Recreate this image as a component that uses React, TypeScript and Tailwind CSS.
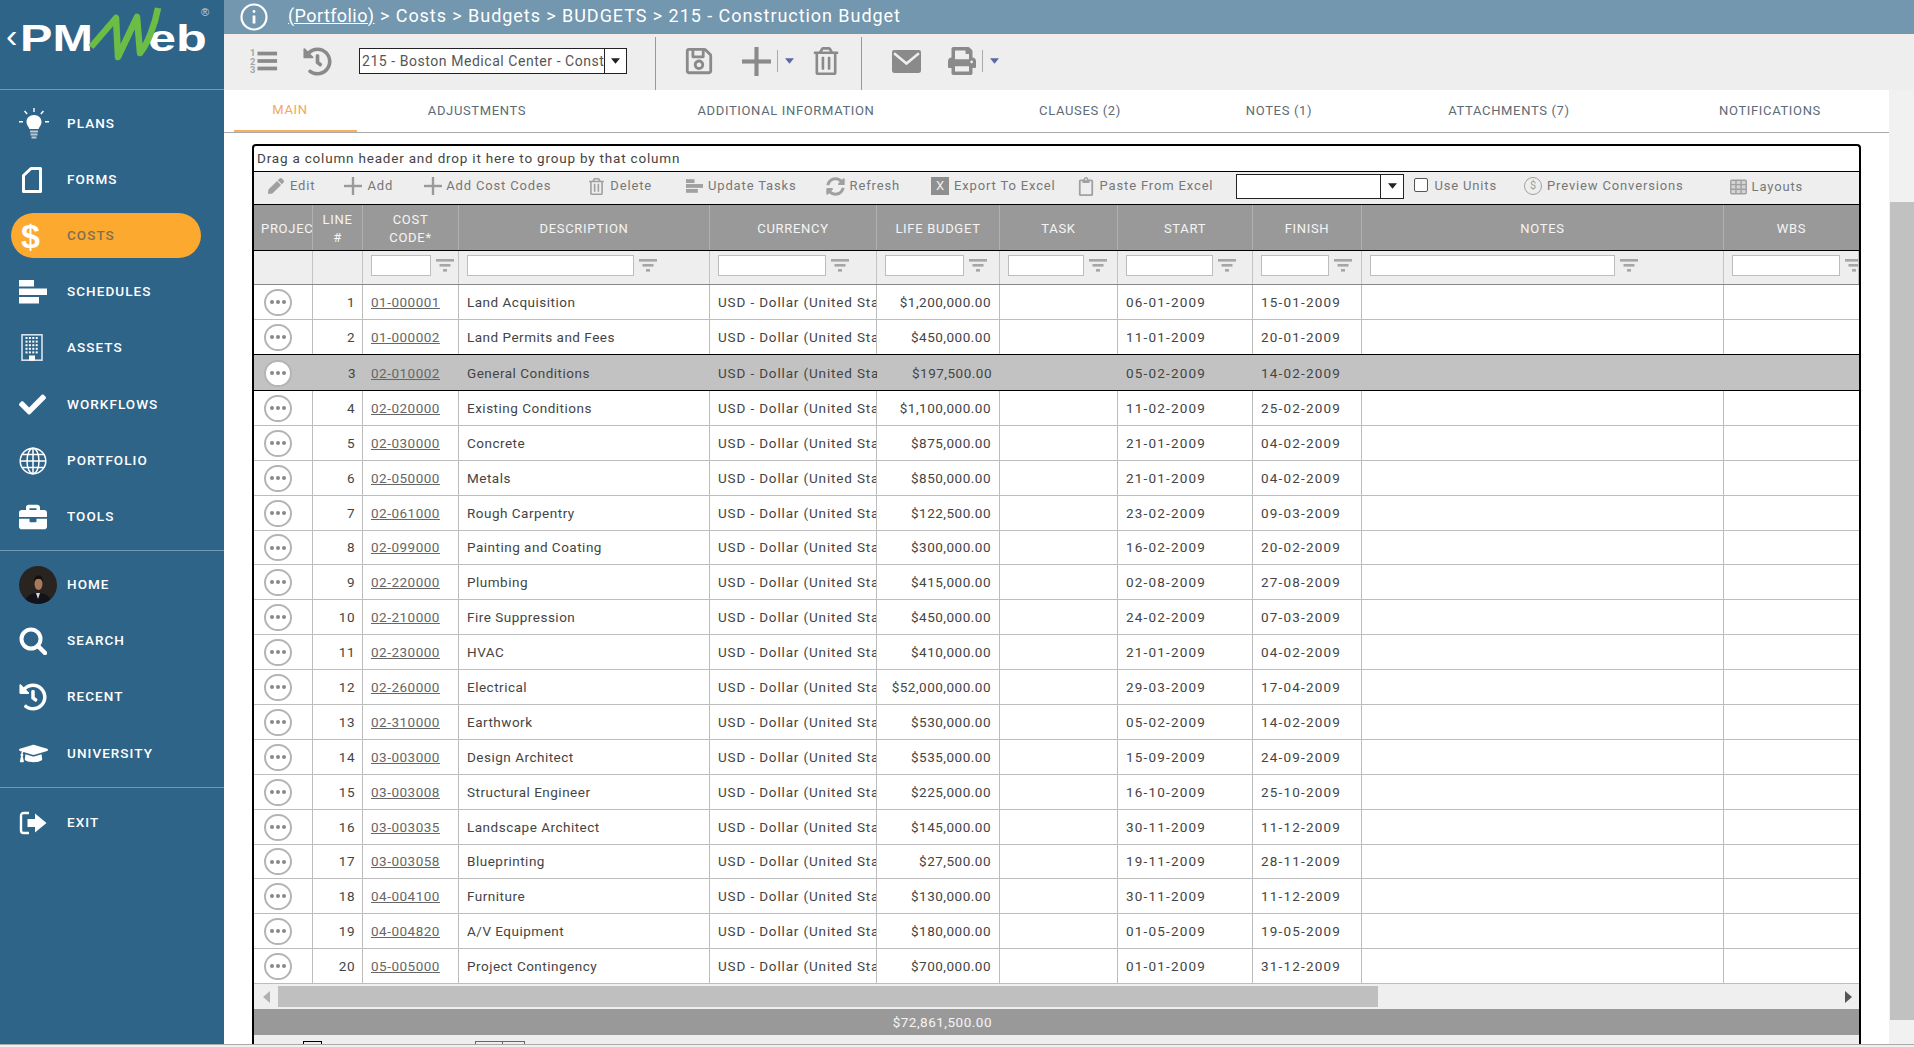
import React from "react";
import { FaCheck, FaBriefcase, FaHistory, FaGraduationCap, FaRegSave, FaRegTrashAlt, FaPrint, FaSyncAlt, FaRegClipboard, FaPen } from "react-icons/fa";

const cols = "grid grid-cols-[59px_50px_96px_251px_167px_123px_118px_135px_109px_362px_135px]";

const rows: [string, string, string, string, string][] = [
  ["01-000001", "Land Acquisition", "$1,200,000.00", "06-01-2009", "15-01-2009"],
  ["01-000002", "Land Permits and Fees", "$450,000.00", "11-01-2009", "20-01-2009"],
  ["02-010002", "General Conditions", "$197,500.00", "05-02-2009", "14-02-2009"],
  ["02-020000", "Existing Conditions", "$1,100,000.00", "11-02-2009", "25-02-2009"],
  ["02-030000", "Concrete", "$875,000.00", "21-01-2009", "04-02-2009"],
  ["02-050000", "Metals", "$850,000.00", "21-01-2009", "04-02-2009"],
  ["02-061000", "Rough Carpentry", "$122,500.00", "23-02-2009", "09-03-2009"],
  ["02-099000", "Painting and Coating", "$300,000.00", "16-02-2009", "20-02-2009"],
  ["02-220000", "Plumbing", "$415,000.00", "02-08-2009", "27-08-2009"],
  ["02-210000", "Fire Suppression", "$450,000.00", "24-02-2009", "07-03-2009"],
  ["02-230000", "HVAC", "$410,000.00", "21-01-2009", "04-02-2009"],
  ["02-260000", "Electrical", "$52,000,000.00", "29-03-2009", "17-04-2009"],
  ["02-310000", "Earthwork", "$530,000.00", "05-02-2009", "14-02-2009"],
  ["03-003000", "Design Architect", "$535,000.00", "15-09-2009", "24-09-2009"],
  ["03-003008", "Structural Engineer", "$225,000.00", "16-10-2009", "25-10-2009"],
  ["03-003035", "Landscape Architect", "$145,000.00", "30-11-2009", "11-12-2009"],
  ["03-003058", "Blueprinting", "$27,500.00", "19-11-2009", "28-11-2009"],
  ["04-004100", "Furniture", "$130,000.00", "30-11-2009", "11-12-2009"],
  ["04-004820", "A/V Equipment", "$180,000.00", "01-05-2009", "19-05-2009"],
  ["05-005000", "Project Contingency", "$700,000.00", "01-01-2009", "31-12-2009"],
];

function Bulb() {
  return (
    <svg viewBox="0 0 30 34" className="w-[30px] h-[34px]" fill="#fff">
      <path d="M15 8c-4.500 0-7.500 3.200-7.500 7 0 3 2 4.600 3 7h9c1-2.400 3-4 3-7 0-3.800-3-7-7.500-7z" />
      <rect x="11" y="23.500" width="8" height="2" fill="#b9c9d6" />
      <rect x="11.500" y="26.500" width="7" height="2" fill="#b9c9d6" />
      <rect x="12.500" y="29.500" width="5" height="2" fill="#b9c9d6" />
      <path d="M14.300 1h1.400v4h-1.400zM5 4.500l1.100-.9 2.600 3-1.100.9zM25 4.500l-1.100-.9-2.600 3 1.100.9zM0 14h4v1.400H0zM26 14h4v1.400h-4z" />
    </svg>
  );
}
function FormsIcon() {
  return (
    <svg viewBox="0 0 20 26" className="w-[20px] h-[26px]" fill="none" stroke="#fff" strokeWidth="3">
      <path d="M1.500 8.500 L9 1.500 H18.500 V24.500 H1.500 Z" strokeLinejoin="round" />
    </svg>
  );
}
function BarsIcon() {
  return (
    <svg viewBox="0 0 28 24" className="w-[28px] h-[24px]" fill="#fff">
      <rect x="0" y="0" width="15" height="6.500" />
      <rect x="0" y="8.500" width="28" height="6.500" />
      <rect x="0" y="17" width="20" height="6.500" />
    </svg>
  );
}
function Building() {
  const cells = [];
  for (let r = 0; r < 5; r++)
    for (let c = 0; c < 4; c++)
      cells.push(<rect key={r + "-" + c} x={4.500 + c * 3.400} y={3 + r * 3.600} width="2" height="2" fill="#fff" />);
  return (
    <svg viewBox="0 0 22 27" className="w-[22px] h-[27px]" fill="none">
      <rect x="1" y="0.800" width="20" height="25.400" stroke="#d7e3ec" strokeWidth="1.600" fill="#2f6489" />
      {cells}
      <rect x="8" y="21.500" width="6" height="5" fill="#fff" />
    </svg>
  );
}
function Globe() {
  return (
    <svg viewBox="0 0 28 28" className="w-[28px] h-[28px]" fill="none" stroke="#fff" strokeWidth="1.500">
      <circle cx="14" cy="14" r="12.800" />
      <ellipse cx="14" cy="14" rx="6" ry="12.800" />
      <path d="M14 1.200V26.800M1.200 14H26.800M3 7.500H25M3 20.500H25" />
    </svg>
  );
}
function SearchIcon() {
  return (
    <svg viewBox="0 0 28 28" className="w-[28px] h-[28px]" fill="none" stroke="#fff">
      <circle cx="12" cy="12" r="9.500" strokeWidth="4" />
      <path d="M19 19 L26 26" strokeWidth="4.500" strokeLinecap="round" />
    </svg>
  );
}
function ExitIcon() {
  return (
    <svg viewBox="0 0 28 24" className="w-[28px] h-[24px]" fill="none">
      <path d="M10 2H4.500A2.500 2.500 0 0 0 2 4.500V19.500A2.500 2.500 0 0 0 4.500 22H10" stroke="#fff" strokeWidth="2.400" />
      <path d="M8.500 8H16V2.500L27.500 12 16 21.500V16H8.500z" fill="#fff" />
    </svg>
  );
}
function Avatar() {
  return (
    <svg viewBox="0 0 38 38" className="w-[38px] h-[38px] rounded-full">
      <rect width="38" height="38" fill="#2a2420" />
      <path d="M5 38c1-8 7-11 14-11s13 3 14 11z" fill="#12131a" />
      <path d="M17 27l2 6 2-6z" fill="#d8d8dc" />
      <ellipse cx="19.500" cy="18" rx="4" ry="6" fill="#a9795c" />
      <path d="M15 16c0-5 2-6.500 4.500-6.500S24 11 24 16c-1-2.500-2-3-4.500-3S16 13.500 15 16z" fill="#16100d" />
    </svg>
  );
}

function Nav({ icon, label, active, mb }: { icon: React.ReactNode; label: string; active?: boolean; mb?: string }) {
  return (
    <div className={"flex items-center h-[45px] ml-[11px] rounded-full " + (mb || "mb-[11px] ") + (active ? " w-[190px] bg-[#fba92f] text-[#7f6f54]" : " text-white")}>
      <div className="w-[56px] flex items-center pl-[8px] shrink-0">{icon}</div>
      <span className="text-[13.5px] font-medium tracking-[1.05px]">{label}</span>
    </div>
  );
}

function Logo() {
  return (
    <div className="relative h-[90px] border-b border-[#6f9ab5] shrink-0 font-['Liberation_Sans',sans-serif] text-white overflow-hidden">
      <div className="flex items-start pt-[15px] pl-[6px]">
        <span className="text-[34px] leading-[40px] font-normal w-[14px] shrink-0">‹</span>
        <span className="text-[36px] leading-[48px] font-bold w-[128px] shrink-0 origin-left scale-x-[1.35]">PM</span>
        <span className="text-[36px] leading-[48px] font-bold origin-left scale-x-[1.4]">eb</span>
      </div>
      <svg viewBox="0 0 80 60" className="absolute left-[85px] top-[3px] w-[80px] h-[60px]" fill="none">
        <path d="M6 44 L31 15 L33 54 L52 14 L55 50 C62 42 70 22 73 5" stroke="#6cbd45" strokeWidth="6.500" strokeLinejoin="round" />
      </svg>
      <span className="absolute left-[201px] top-[5px] text-[11px] leading-[14px] text-[#c7d6e1]">®</span>
    </div>
  );
}

function Sidebar() {
  return (
    <aside className="w-[224px] shrink-0 bg-[#2f6489] flex flex-col">
      <Logo />
      <div className="pt-[11px] border-b border-[#6f9ab5] h-[461px] shrink-0">
        <Nav icon={<Bulb />} label="PLANS" />
        <Nav icon={<div className="pl-[3px]"><FormsIcon /></div>} label="FORMS" />
        <Nav active icon={<span className="pl-[2px] text-white text-[34px] leading-none font-bold font-['Liberation_Sans',sans-serif]">$</span>} label="COSTS" />
        <Nav icon={<BarsIcon />} label="SCHEDULES" />
        <Nav mb="mb-[12px]" icon={<div className="pl-[2px]"><Building /></div>} label="ASSETS" />
        <Nav icon={<FaCheck size={27} color="#fff" />} label="WORKFLOWS" />
        <Nav icon={<Globe />} label="PORTFOLIO" />
        <Nav icon={<FaBriefcase size={28} color="#fff" />} label="TOOLS" />
      </div>
      <div className="pt-[11px] border-b border-[#6f9ab5] h-[237px] shrink-0">
        <Nav icon={<Avatar />} label="HOME" />
        <Nav icon={<SearchIcon />} label="SEARCH" />
        <Nav mb="mb-[12px]" icon={<FaHistory size={28} color="#fff" />} label="RECENT" />
        <Nav icon={<FaGraduationCap size={29} color="#fff" />} label="UNIVERSITY" />
      </div>
      <div className="pt-[12px]">
        <Nav icon={<ExitIcon />} label="EXIT" />
      </div>
    </aside>
  );
}

function Filter() {
  return (
    <svg viewBox="0 0 18 14" className="w-[18px] h-[14px] shrink-0" fill="#a6a6a6">
      <rect x="0" y="0" width="18" height="2.600" />
      <rect x="3.500" y="5" width="11" height="2.600" />
      <rect x="7" y="10" width="4" height="2.600" />
    </svg>
  );
}

function Caret({ color = "#222" }: { color?: string }) {
  return (
    <svg viewBox="0 0 10 6" className="w-[9px] h-[6px]" fill={color}>
      <path d="M0 0H10L5 6z" />
    </svg>
  );
}

function Header() {
  return (
    <div className="h-[34px] shrink-0 bg-[#7397ae] flex items-center text-white pl-[16px]">
      <svg viewBox="0 0 28 28" className="w-[28px] h-[28px]" fill="none" stroke="#fff" strokeWidth="2.200">
        <circle cx="14" cy="14" r="12.500" />
        <path d="M14 12.500V20.500" strokeWidth="2.800" />
        <circle cx="14" cy="8.500" r="1.400" fill="#fff" stroke="none" />
      </svg>
      <div className="ml-[20px] text-[18px] leading-[30px] pb-[3px] tracking-[0.95px] whitespace-nowrap">
        <span className="underline tracking-[0.42px]">(Portfolio)</span> &gt; Costs &gt; Budgets &gt; BUDGETS &gt; 215 - Construction Budget
      </div>
    </div>
  );
}

function Toolbar() {
  const tall = "self-stretch -mb-[5px] w-px bg-[#999]";
  return (
    <div className="h-[56px] shrink-0 bg-[#eeeeee] border-t-[3px] border-[#f3ebe8] pb-[5px] flex items-center text-[#8a8a8a]">
      <svg viewBox="0 0 30 28" className="ml-[26px] w-[28px] h-[28px]" fill="#8a8a8a">
        <rect x="8" y="4" width="21" height="4" />
        <rect x="8" y="12" width="21" height="4" />
        <rect x="8" y="20" width="21" height="4" />
        <text x="0" y="9" fontSize="10" fontWeight="700" fill="#a5a5a5">1</text>
        <text x="0" y="18" fontSize="10" fontWeight="700" fill="#a5a5a5">2</text>
        <text x="0" y="27" fontSize="10" fontWeight="700" fill="#a5a5a5">3</text>
      </svg>
      <div className="ml-[25px]"><FaHistory size={29} /></div>
      <div className="ml-[27px] w-[268px] h-[26px] bg-white border border-[#222] flex items-center text-[14px] tracking-[0.55px] text-[#555]">
        <div className="flex-1 overflow-hidden whitespace-nowrap pl-[2px]">215 - Boston Medical Center - Construction Budget</div>
        <div className="w-[22px] h-full border-l border-[#222] flex items-center justify-center"><Caret /></div>
      </div>
      <div className={"ml-[28px] " + tall} />
      <div className="ml-[28px]"><FaRegSave size={30} /></div>
      <svg viewBox="0 0 28 28" className="ml-[28px] w-[29px] h-[29px]" fill="#8a8a8a">
        <rect x="12" y="0" width="4" height="28" />
        <rect x="0" y="12" width="28" height="4" />
      </svg>
      <div className="ml-[6px] w-px h-[22px] bg-[#aaa]" />
      <div className="ml-[7px]"><Caret color="#5a6aa0" /></div>
      <div className="ml-[18px]"><FaRegTrashAlt size={28} /></div>
      <div className={"ml-[21px] " + tall} />
      <svg viewBox="0 0 28 22" className="ml-[30px] w-[29px] h-[23px]">
        <rect width="28" height="22" rx="2" fill="#8a8a8a" />
        <path d="M2 3L14 13 26 3" stroke="#eee" strokeWidth="2.400" fill="none" />
      </svg>
      <div className="ml-[27px]"><FaPrint size={28} /></div>
      <div className="ml-[6px] w-px h-[22px] bg-[#aaa]" />
      <div className="ml-[7px]"><Caret color="#5a6aa0" /></div>
    </div>
  );
}

function Tabs() {
  const t: [string, string][] = [
    ["ADJUSTMENTS", "w-[240px]"],
    ["ADDITIONAL INFORMATION", "w-[378px]"],
    ["CLAUSES (2)", "w-[210px]"],
    ["NOTES (1)", "w-[188px]"],
    ["ATTACHMENTS (7)", "w-[272px]"],
    ["NOTIFICATIONS", "w-[250px]"],
  ];
  return (
    <div className="h-[43px] shrink-0 border-b border-[#aaaaaa] flex pl-[10px] text-[13px] tracking-[0.65px] text-[#5c6b75] overflow-hidden whitespace-nowrap">
      <div className="w-[123px] h-[43px] border-b-[3px] border-[#f6b065] text-[#f3a85b] flex items-center justify-center pr-[11px] shrink-0">MAIN</div>
      {t.map(([l, w]) => (
        <div key={l} className={"flex items-center justify-center shrink-0 " + w}>{l}</div>
      ))}
    </div>
  );
}

function Tool({ icon, label, ml, low }: { icon: React.ReactNode; label: string; ml: string; low?: boolean }) {
  return (
    <div className={"flex items-center shrink-0 gap-[5px] " + ml + (low ? " mt-[2px]" : "")}>
      {icon}
      <span className="text-[#777]">{label}</span>
    </div>
  );
}

function Plus() {
  return (
    <svg viewBox="0 0 18 18" className="w-[18px] h-[18px]" fill="#9a9a9a">
      <rect x="7.800" y="0" width="2.400" height="18" />
      <rect x="0" y="7.800" width="18" height="2.400" />
    </svg>
  );
}

function GridToolbar() {
  return (
    <div className="h-[33px] pb-[4px] bg-[#eeeeee] border-b border-black flex items-center text-[13px] tracking-[0.85px] whitespace-nowrap overflow-hidden">
      <Tool ml="ml-[13px]" icon={<div className="w-[18px] flex justify-center"><FaPen size={16} color="#a0a0a0" /></div>} label="Edit" />
      <Tool ml="ml-[29px]" icon={<div className="w-[18px]"><Plus /></div>} label="Add" />
      <Tool ml="ml-[31px]" icon={<div className="w-[17px]"><Plus /></div>} label="Add Cost Codes" />
      <Tool ml="ml-[36px]" icon={<div className="w-[18px] flex justify-center"><FaRegTrashAlt size={17} color="#a0a0a0" /></div>} label="Delete" />
      <Tool
        ml="ml-[34px]"
        icon={
          <svg viewBox="0 0 20 16" className="w-[17px] h-[16px]" fill="#a0a0a0">
            <rect width="10" height="4.500" />
            <rect y="5.700" width="20" height="4.500" />
            <rect y="11.500" width="14" height="4.500" />
          </svg>
        }
        label="Update Tasks"
      />
      <Tool ml="ml-[29px]" icon={<div className="w-[19px]"><FaSyncAlt size={19} color="#a0a0a0" /></div>} label="Refresh" />
      <Tool
        ml="ml-[31px]"
        icon={<div className="w-[18px] h-[18px] bg-[#8f8f8f] text-[#eee] text-[13px] leading-[18px] text-center tracking-normal">X</div>}
        label="Export To Excel"
      />
      <Tool ml="ml-[21px]" icon={<div className="w-[18px] flex justify-center"><FaRegClipboard size={19} color="#a0a0a0" /></div>} label="Paste From Excel" />
      <div className="ml-[23px] w-[168px] h-[25px] bg-white border border-[#222] flex justify-end shrink-0">
        <div className="w-[23px] h-full border-l border-[#222] flex items-center justify-center"><Caret /></div>
      </div>
      <div className="ml-[10px] w-[14px] h-[14px] bg-white border border-[#555] rounded-[2px] shrink-0 -mt-[2px]" />
      <span className="ml-[6px] text-[#777]">Use Units</span>
      <Tool
        ml="ml-[27px]"
        icon={<div className="w-[18px] h-[18px] rounded-full border border-[#a0a0a0] text-[#a0a0a0] text-[11px] leading-[16px] text-center tracking-normal">$</div>}
        label="Preview Conversions"
      />
      <Tool
        ml="ml-[46px]"
        low
        icon={
          <svg viewBox="0 0 18 16" className="w-[17px] h-[16px]" fill="none" stroke="#a0a0a0" strokeWidth="1.500">
            <rect x="0.800" y="0.800" width="16.400" height="14.400" rx="1" fill="#d4d4d4" />
            <path d="M0.800 5.500H17.200M0.800 10.300H17.200M6.300 1V15M11.700 1V15" />
          </svg>
        }
        label="Layouts"
      />
    </div>
  );
}

function HeaderRow() {
  const c = "flex items-center justify-center text-center border-r border-[#b0b0b0] leading-[18px] overflow-hidden pt-[2px]";
  return (
    <div className={cols + " h-[46px] bg-[#999999] border-b border-black text-white/90 text-[13px] tracking-[0.7px]"}>
      <div className={c + " justify-start whitespace-nowrap pl-[7px]"}>PROJECT</div>
      <div className={c}>LINE<br />#</div>
      <div className={c}>COST<br />CODE*</div>
      <div className={c}>DESCRIPTION</div>
      <div className={c}>CURRENCY</div>
      <div className={c}>LIFE BUDGET</div>
      <div className={c}>TASK</div>
      <div className={c}>START</div>
      <div className={c}>FINISH</div>
      <div className={c}>NOTES</div>
      <div className={c + " border-r-0"}>WBS</div>
    </div>
  );
}

function FilterCell({ w }: { w: string }) {
  return (
    <div className="flex items-center pl-[8px] pb-[4px] border-r border-[#c4c4c4] overflow-hidden">
      <div className={"h-[21px] bg-white border border-[#bdbdbd] shrink-0 " + w} />
      <div className="ml-[5px]"><Filter /></div>
    </div>
  );
}

function FilterRow() {
  return (
    <div className={cols + " h-[34px] bg-[#eeeeee] border-b border-[#888]"}>
      <div className="border-r border-[#c4c4c4]" />
      <div className="border-r border-[#c4c4c4]" />
      <FilterCell w="w-[60px]" />
      <FilterCell w="w-[167px]" />
      <FilterCell w="w-[108px]" />
      <FilterCell w="w-[79px]" />
      <FilterCell w="w-[76px]" />
      <FilterCell w="w-[87px]" />
      <FilterCell w="w-[68px]" />
      <FilterCell w="w-[245px]" />
      <FilterCell w="w-[108px]" />
    </div>
  );
}

function Row({ i, r }: { i: number; r: [string, string, string, string, string] }) {
  const sel = i === 3;
  const cell = "flex items-center overflow-hidden whitespace-nowrap " + (sel ? "pt-[1px] " : "border-r border-[#bdbdbd] ");
  const h = i === 3 ? "h-[36px] " : i === 8 || i === 17 ? "h-[34px] " : "h-[35px] ";
  return (
    <div className={cols + " " + h + "text-[13.5px] tracking-[0.5px] text-[#444] border-b " + (sel || i === 2 ? "border-black " : "border-[#bdbdbd] ") + (sel ? "bg-[#c2c2c2]" : "bg-white")}>
      <div className={cell + " pl-[10px]"}>
        <div className={"w-[28px] h-[27px] rounded-full border-2 border-[#b4b4b4] flex items-center justify-center gap-[2px] " + (sel ? "bg-white" : "")}>
          <i className="w-[4px] h-[4px] rounded-full bg-[#888]" />
          <i className="w-[4px] h-[4px] rounded-full bg-[#888]" />
          <i className="w-[4px] h-[4px] rounded-full bg-[#888]" />
        </div>
      </div>
      <div className={cell + " justify-end pr-[7px]"}>{i}</div>
      <div className={cell + " pl-[8px]"}><span className="underline text-[#666] tracking-[0.5px]">{r[0]}</span></div>
      <div className={cell + " pl-[8px]"}>{r[1]}</div>
      <div className={cell + " pl-[8px] tracking-[0.85px]"}>USD - Dollar (United States)</div>
      <div className={cell + " justify-end pr-[8px]"}>{r[2]}</div>
      <div className={cell} />
      <div className={cell + " pl-[8px] tracking-[1.2px]"}>{r[3]}</div>
      <div className={cell + " pl-[8px] tracking-[1.2px]"}>{r[4]}</div>
      <div className={cell} />
      <div className={cell + " border-r-0"} />
    </div>
  );
}

function GridScroll() {
  return (
    <div className="h-[25px] bg-[#efefef] flex items-center">
      <div className="w-[24px] flex items-center justify-center">
        <svg viewBox="0 0 7 12" className="w-[7px] h-[12px]" fill="#b0b0b0"><path d="M7 0V12L0 6z" /></svg>
      </div>
      <div className="w-[1100px] h-[21px] bg-[#bfbfbf]" />
      <div className="flex-1 flex justify-end pr-[7px]">
        <svg viewBox="0 0 7 12" className="w-[7px] h-[12px]" fill="#555"><path d="M0 0V12L7 6z" /></svg>
      </div>
    </div>
  );
}

function Grid() {
  return (
    <div className="ml-[28px] mt-[11px] w-[1609px] border-2 border-b-0 border-black rounded-t-[4px]">
      <div className="h-[26px] border-b border-black flex items-center pl-[3px] text-[13.5px] tracking-[0.8px] text-[#444] whitespace-nowrap">
        Drag a column header and drop it here to group by that column
      </div>
      <GridToolbar />
      <HeaderRow />
      <FilterRow />
      {rows.map((r, i) => (
        <Row key={r[0]} i={i + 1} r={r} />
      ))}
      <GridScroll />
      <div className={cols + " h-[26px] bg-[#999999] text-[13.5px] tracking-[0.5px] text-white/90"}>
        <div /><div /><div /><div /><div />
        <div className="flex items-center justify-end pr-[8px]">$72,861,500.00</div>
      </div>
      <div className="h-[9px] bg-[#eeeeee] flex items-end pl-[49px]">
        <div className="w-[19px] h-[3px] border border-b-0 border-black" />
        <div className="ml-[153px] w-[28px] h-[3px] border border-b-0 border-[#666]" />
        <div className="w-[22px] h-[3px] border border-b-0 border-l-0 border-[#666]" />
      </div>
    </div>
  );
}

export default function App() {
  return (
    <div className="w-[1914px] h-screen overflow-hidden flex flex-col bg-white font-['Roboto',sans-serif]">
      <div className="flex-1 flex min-h-0 overflow-hidden">
        <Sidebar />
        <div className="flex-1 flex flex-col min-w-0">
          <Header />
          <Toolbar />
          <div className="flex flex-1 min-h-0 overflow-hidden">
            <div className="w-[1665px] shrink-0 overflow-hidden">
              <Tabs />
              <Grid />
            </div>
            <div className="flex-1 bg-[#f1f1f1] pl-[1px]">
              <div className="mt-[112px] h-[818px] bg-[#c1c1c1]" />
            </div>
          </div>
        </div>
      </div>
      <div className="h-[3px] shrink-0 bg-[#f0f0f0] border-t border-[#aaaaaa]" />
    </div>
  );
}
